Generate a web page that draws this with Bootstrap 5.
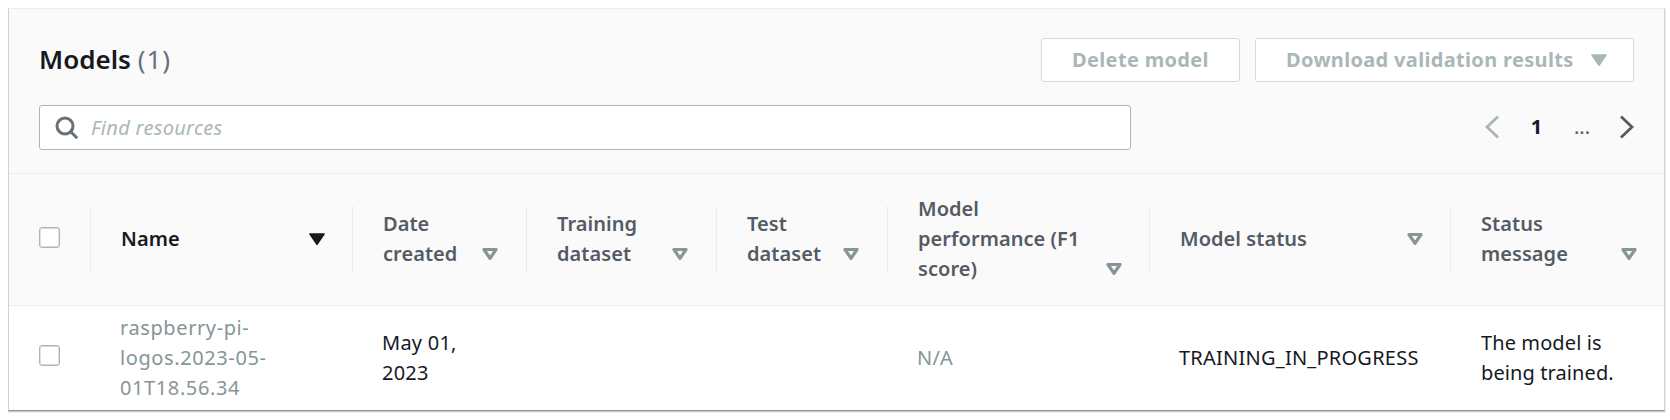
<!DOCTYPE html>
<html lang="en">
<head>
<meta charset="utf-8">
<meta name="viewport" content="width=device-width, initial-scale=1">
<title>Models</title>
<link rel="stylesheet" href="https://cdn.jsdelivr.net/npm/bootstrap@5.3.0/dist/css/bootstrap.min.css">
<style>
  body { font-family: "Noto Sans", "Open Sans", sans-serif; font-size: 20px; line-height: 30px; color: #16191f; background: #fff; padding: 8px 5px 8px 8px; }
  .panel { border: 1px solid #ccd3d5; border-top-color: #eaeded; border-bottom-color: #879596; border-radius: 0; height: 403px; color: #16191f;
    box-shadow: 0 1px 0 #c3cbcd, 0 2px 0 #f0f2f2, 1px 1px 0 #edf0f0; }
  .panel-head { height: 165px; flex: none; padding: 29px 30px 0; background: #fafafa; border-bottom: 1px solid #eaeded; border-radius: 0 !important; }
  .title { font-size: 26px; line-height: 36px; font-weight: 600; margin: 3px 0 0; letter-spacing: 0; }
  .title .count { font-weight: 400; color: #687078; letter-spacing: 1px; }
  .btn-panel { --bs-btn-disabled-opacity: 1; --bs-btn-disabled-color: #aab7b8; --bs-btn-disabled-bg: #fff; --bs-btn-disabled-border-color: #d5dbdb;
    height: 44px; padding: 0 29px; font-size: 20px; line-height: 42px; font-weight: 700; border-radius: 3px; letter-spacing: .33px; white-space: nowrap; }
  .search { width: 1092px; height: 45px; border: 1px solid #aab7b8; border-radius: 3px; background: #fff; padding: 0 15px; }
  .search input { font-size: 20px; line-height: 30px; font-style: italic; padding: 0; letter-spacing: .3px; box-shadow: none !important; }
  .search input::placeholder { color: #aab7b8; opacity: 1; }
  .pager { color: #545b64; height: 45px; margin-top: -1px; }
  .grid { table-layout: fixed; margin: 0; --bs-table-bg: transparent; --bs-table-color: #16191f; }
  .grid > thead > tr > th { height: 132px; padding: 0 28px 3px 30px; background: #fafafa; color: #545b64; font-weight: 600; letter-spacing: .05px; border: 0; vertical-align: middle;
    background-image: linear-gradient(#eaeded, #eaeded), linear-gradient(#eaeded, #eaeded); background-size: 1px 66px, 100% 1px; background-repeat: no-repeat; background-position: right 32px, left bottom; }
  .grid > thead > tr > th:last-child { background-size: 0 0, 100% 1px; padding-right: 27px; }
  .grid > thead > tr > th.sorted { color: #16191f; }
  .grid > tbody > tr > td { height: 103px; padding: 1px 15px 0 29px; border: 0; vertical-align: middle; letter-spacing: .24px; }
  .grid > tbody > tr > td:last-child { letter-spacing: .1px; padding-left: 30px; }
  .grid > thead > tr > th.pick { padding: 0 0 5px 30px; }
  .grid > tbody > tr > td.pick { padding: 0 0 4px 30px; }
  .pick .form-check-input { display: block; width: 21px; height: 21px; margin: 0; border: 1px solid #aab7b8; border-radius: 3px; box-shadow: inset 0 0 0 .4px #aab7b8; }
  .grid > tbody > tr > td.name { color: #879596; letter-spacing: .6px; }
  .grid > tbody > tr > td.muted { color: #879596; }
  .sort { width: 16px; height: 12px; margin: 0 1px 9px 0; flex: none; color: #879596; }
  .sorted .sort, th:last-child .sort { margin-right: 0; }
  .sorted .sort { color: #16191f; }
  th:nth-child(6) .sort, th:nth-child(7) .sort { margin-right: 0; }
</style>
</head>
<body>
<svg class="d-none" aria-hidden="true">
  <symbol id="tri" viewBox="0 0 16 12"><path d="M1 1h14L8 11.2z" fill="currentColor" stroke="currentColor" stroke-width="1.6" stroke-linejoin="round"/></symbol>
  <symbol id="tri-open" viewBox="0 0 16 12"><path d="M2 1.5h12L8 10.4z" fill="none" stroke="currentColor" stroke-width="3.2" stroke-linejoin="round"/></symbol>
</svg>

<main class="card panel">
  <header class="card-header panel-head">
    <div class="d-flex justify-content-between align-items-start">
      <h2 class="title">Models <span class="count">(1)</span></h2>
      <div class="d-flex" style="gap:15px">
        <button class="btn btn-panel" style="width:199px" disabled>Delete model</button>
        <button class="btn btn-panel d-flex align-items-center justify-content-between" style="width:379px;padding:0 26px 0 30px" disabled>
          <span>Download validation results</span>
          <svg width="16" height="12"><use href="#tri"/></svg>
        </button>
      </div>
    </div>
    <div class="d-flex justify-content-between align-items-start" style="margin-top:23px">
      <label class="search d-flex align-items-center">
        <svg class="flex-shrink-0" width="24" height="24" viewBox="0 0 24 24" fill="none" stroke="#687078" stroke-width="3"><circle cx="10" cy="10" r="8"/><path d="M15.8 15.8l6.4 6.4"/></svg>
        <input type="text" class="form-control border-0 bg-transparent" style="margin-left:12px" placeholder="Find resources">
      </label>
      <nav class="pager d-flex align-items-center text-nowrap">
        <svg width="14" height="24" viewBox="0 0 14 24" fill="none" stroke="#aab7b8" stroke-width="2.8"><path d="M13 1.5L2 12l11 10.5"/></svg>
        <span class="fw-bold text-center" style="width:75px;color:#16191f">1</span>
        <span class="text-center" style="width:16px">...</span>
        <svg style="margin-left:30px" width="14" height="24" viewBox="0 0 14 24" fill="none" stroke="#545b64" stroke-width="2.8"><path d="M1 1.5L12 12 1 22.5"/></svg>
      </nav>
    </div>
  </header>

  <table class="table grid">
    <colgroup>
      <col style="width:82px"><col style="width:262px"><col style="width:174px"><col style="width:190px">
      <col style="width:171px"><col style="width:262px"><col style="width:301px"><col>
    </colgroup>
    <thead>
      <tr>
        <th class="pick"><input class="form-check-input" type="checkbox" aria-label="Select all"></th>
        <th class="sorted"><div class="d-flex justify-content-between align-items-end">Name<svg class="sort"><use href="#tri"/></svg></div></th>
        <th><div class="d-flex justify-content-between align-items-end"><span>Date<br>created</span><svg class="sort"><use href="#tri-open"/></svg></div></th>
        <th><div class="d-flex justify-content-between align-items-end"><span>Training<br>dataset</span><svg class="sort"><use href="#tri-open"/></svg></div></th>
        <th><div class="d-flex justify-content-between align-items-end"><span>Test<br>dataset</span><svg class="sort"><use href="#tri-open"/></svg></div></th>
        <th><div class="d-flex justify-content-between align-items-end"><span class="text-nowrap">Model<br>performance (F1<br>score)</span><svg class="sort"><use href="#tri-open"/></svg></div></th>
        <th><div class="d-flex justify-content-between align-items-end">Model status<svg class="sort"><use href="#tri-open"/></svg></div></th>
        <th><div class="d-flex justify-content-between align-items-end"><span>Status<br>message</span><svg class="sort"><use href="#tri-open"/></svg></div></th>
      </tr>
    </thead>
    <tbody>
      <tr>
        <td class="pick"><input class="form-check-input" type="checkbox" aria-label="Select model"></td>
        <td class="name">raspberry-pi-<br>logos.2023-05-<br>01T18.56.34</td>
        <td>May 01,<br>2023</td>
        <td></td>
        <td></td>
        <td class="muted">N/A</td>
        <td>TRAINING_IN_PROGRESS</td>
        <td class="text-nowrap">The model is<br>being trained.</td>
      </tr>
    </tbody>
  </table>
</main>
<script src="https://cdn.jsdelivr.net/npm/bootstrap@5.3.0/dist/js/bootstrap.bundle.min.js"></script>
</body>
</html>
